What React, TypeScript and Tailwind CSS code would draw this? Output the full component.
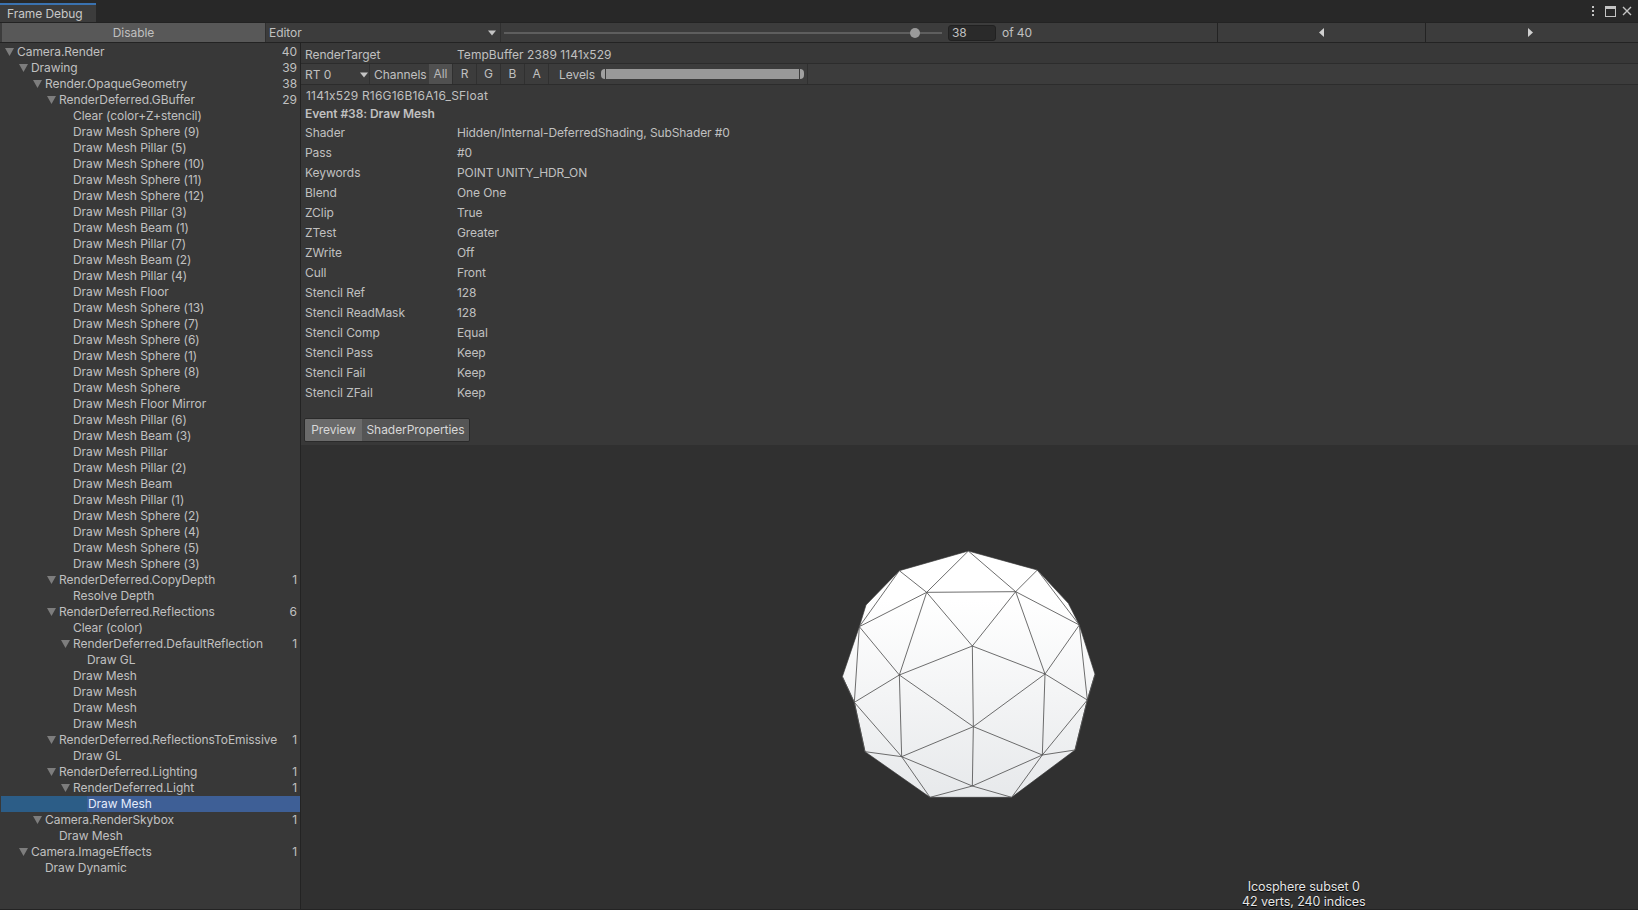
import React from "react";

type Row = { label: string; depth: number; arrow?: boolean; count?: number; selected?: boolean };

const rows: Row[] = [
  { label: "Camera.Render", depth: 0, arrow: true, count: 40 },
  { label: "Drawing", depth: 1, arrow: true, count: 39 },
  { label: "Render.OpaqueGeometry", depth: 2, arrow: true, count: 38 },
  { label: "RenderDeferred.GBuffer", depth: 3, arrow: true, count: 29 },
  { label: "Clear (color+Z+stencil)", depth: 4 },
  { label: "Draw Mesh Sphere (9)", depth: 4 },
  { label: "Draw Mesh Pillar (5)", depth: 4 },
  { label: "Draw Mesh Sphere (10)", depth: 4 },
  { label: "Draw Mesh Sphere (11)", depth: 4 },
  { label: "Draw Mesh Sphere (12)", depth: 4 },
  { label: "Draw Mesh Pillar (3)", depth: 4 },
  { label: "Draw Mesh Beam (1)", depth: 4 },
  { label: "Draw Mesh Pillar (7)", depth: 4 },
  { label: "Draw Mesh Beam (2)", depth: 4 },
  { label: "Draw Mesh Pillar (4)", depth: 4 },
  { label: "Draw Mesh Floor", depth: 4 },
  { label: "Draw Mesh Sphere (13)", depth: 4 },
  { label: "Draw Mesh Sphere (7)", depth: 4 },
  { label: "Draw Mesh Sphere (6)", depth: 4 },
  { label: "Draw Mesh Sphere (1)", depth: 4 },
  { label: "Draw Mesh Sphere (8)", depth: 4 },
  { label: "Draw Mesh Sphere", depth: 4 },
  { label: "Draw Mesh Floor Mirror", depth: 4 },
  { label: "Draw Mesh Pillar (6)", depth: 4 },
  { label: "Draw Mesh Beam (3)", depth: 4 },
  { label: "Draw Mesh Pillar", depth: 4 },
  { label: "Draw Mesh Pillar (2)", depth: 4 },
  { label: "Draw Mesh Beam", depth: 4 },
  { label: "Draw Mesh Pillar (1)", depth: 4 },
  { label: "Draw Mesh Sphere (2)", depth: 4 },
  { label: "Draw Mesh Sphere (4)", depth: 4 },
  { label: "Draw Mesh Sphere (5)", depth: 4 },
  { label: "Draw Mesh Sphere (3)", depth: 4 },
  { label: "RenderDeferred.CopyDepth", depth: 3, arrow: true, count: 1 },
  { label: "Resolve Depth", depth: 4 },
  { label: "RenderDeferred.Reflections", depth: 3, arrow: true, count: 6 },
  { label: "Clear (color)", depth: 4 },
  { label: "RenderDeferred.DefaultReflection", depth: 4, arrow: true, count: 1 },
  { label: "Draw GL", depth: 5 },
  { label: "Draw Mesh", depth: 4 },
  { label: "Draw Mesh", depth: 4 },
  { label: "Draw Mesh", depth: 4 },
  { label: "Draw Mesh", depth: 4 },
  { label: "RenderDeferred.ReflectionsToEmissive", depth: 3, arrow: true, count: 1 },
  { label: "Draw GL", depth: 4 },
  { label: "RenderDeferred.Lighting", depth: 3, arrow: true, count: 1 },
  { label: "RenderDeferred.Light", depth: 4, arrow: true, count: 1 },
  { label: "Draw Mesh", depth: 5, selected: true },
  { label: "Camera.RenderSkybox", depth: 2, arrow: true, count: 1 },
  { label: "Draw Mesh", depth: 3 },
  { label: "Camera.ImageEffects", depth: 1, arrow: true, count: 1 },
  { label: "Draw Dynamic", depth: 2 },
];

const props = [
  ["Shader", "Hidden/Internal-DeferredShading, SubShader #0"],
  ["Pass", "#0"],
  ["Keywords", "POINT UNITY_HDR_ON"],
  ["Blend", "One One"],
  ["ZClip", "True"],
  ["ZTest", "Greater"],
  ["ZWrite", "Off"],
  ["Cull", "Front"],
  ["Stencil Ref", "128"],
  ["Stencil ReadMask", "128"],
  ["Stencil Comp", "Equal"],
  ["Stencil Pass", "Keep"],
  ["Stencil Fail", "Keep"],
  ["Stencil ZFail", "Keep"],
];

// sphere vertices, traced from the preview
const v: Record<string, [number, number]> = {
  A: [445, 63], B: [238, 122], C: [652, 120], D: [320, 187], E: [587, 185], F: [118, 290],
  G: [778, 285], H: [457, 348], I: [238, 435], J: [675, 432], K: [67, 440], L: [825, 433],
  M: [103, 517], N: [802, 510], O: [460, 590], P: [245, 680], Q: [667, 675], R: [135, 665],
  S: [765, 660], T: [457, 768], U: [330, 802], V: [575, 802], W: [138, 225], X: [745, 220],
};
const outline = "A C X G L N S V U R M K F W B";
const edges =
  "AD AE BD CE DE DF EG DH EH DI EJ FI GJ HI HJ HO IO JO IP JQ OP OQ OT IM JN FM GN MP NQ MR NS PR QS PT QT PU QV TU TV BF CG KM LN";

function Sphere() {
  const pts = outline
    .split(" ")
    .map((k) => v[k].join(","))
    .join(" ");
  return (
    <svg width="300" height="280" viewBox="0 0 900 840" className="mb-[15px]">
      <defs>
        <linearGradient id="shade" x1="0" y1="0" x2="0" y2="1">
          <stop offset="0.2" stopColor="#ffffff" />
          <stop offset="1" stopColor="#e7e9eb" />
        </linearGradient>
      </defs>
      <polygon points={pts} fill="url(#shade)" stroke="#3a3a3a" strokeWidth="2" />
      {edges.split(" ").map((e, i) => (
        <line
          key={i}
          x1={v[e[0]][0]}
          y1={v[e[0]][1]}
          x2={v[e[1]][0]}
          y2={v[e[1]][1]}
          stroke="#505050"
          strokeWidth="2.5"
        />
      ))}
    </svg>
  );
}

function Down({ className = "" }: { className?: string }) {
  return (
    <svg width="10" height="6" viewBox="0 0 10 6" className={className}>
      <polygon points="1,0.5 9,0.5 5,5.5" fill="#c4c4c4" />
    </svg>
  );
}

function TreeRow({ row }: { row: Row }) {
  const indent = 17 + row.depth * 14;
  if (row.selected) {
    return (
      <div className="flex h-4 items-center bg-[#3e5f96] text-[#e4ecfb]">
        <div className="h-4 bg-[#2c5d87]" style={{ width: indent - 1 }} />
        <span className="pl-px">{row.label}</span>
      </div>
    );
  }
  return (
    <div className="relative flex h-4 items-center pr-[3px]" style={{ paddingLeft: indent - 1 }}>
      {row.arrow && (
        <svg width="9" height="8" viewBox="0 0 9 8" className="absolute top-1" style={{ left: indent - 13 }}>
          <polygon points="0,0 9,0 4.5,8" fill="#7d7d7d" />
        </svg>
      )}
      <span className="flex-1">{row.label}</span>
      {row.count !== undefined && <span>{row.count}</span>}
    </div>
  );
}

function Channel({ label, active }: { label: string; active?: boolean }) {
  return (
    <div
      className={
        "flex h-full w-6 items-center justify-center border-r border-[#303030] " +
        (active ? "bg-[#505050] text-[#b8b8b8]" : "")
      }
    >
      {label}
    </div>
  );
}

export default function App() {
  return (
    <div className="flex h-[910px] w-full flex-col overflow-hidden bg-[#383838] font-['Inter',sans-serif] text-[12px] tracking-[-0.06px] text-[#c0c0c0] [font-feature-settings:'calt'_0]">
      {/* tab strip */}
      <div className="flex h-[22px] shrink-0 items-end justify-between bg-[#282828]">
        <div className="flex h-[19px] w-[96px] items-center border-t-2 border-[#3a72b0] bg-[#3c3c3c] pl-[7px] pt-px text-[#c8c8c8]">
          Frame Debug
        </div>
        <div className="mr-[6px] flex h-full items-center gap-[8px]">
          <svg width="4" height="12" viewBox="0 0 4 12">
            <rect x="1" y="1" width="2" height="2" fill="#c4c4c4" />
            <rect x="1" y="5" width="2" height="2" fill="#c4c4c4" />
            <rect x="1" y="9" width="2" height="2" fill="#c4c4c4" />
          </svg>
          <svg width="11" height="11" viewBox="0 0 11 11" className="ml-[2px] mr-[-2px]">
            <rect x="0.5" y="0.5" width="10" height="10" fill="none" stroke="#c4c4c4" />
            <rect x="0" y="0" width="11" height="3" fill="#c4c4c4" />
          </svg>
          <svg width="10" height="10" viewBox="0 0 10 10">
            <path d="M1 1 L9 9 M9 1 L1 9" stroke="#c4c4c4" strokeWidth="1.4" />
          </svg>
        </div>
      </div>

      {/* toolbar */}
      <div className="flex h-[21px] shrink-0 items-center border-y border-[#232323] bg-[#3c3c3c]">
        <div className="ml-[2px] flex h-full w-[264px] items-center justify-center border-r border-[#303030] bg-[#585858] pt-px">
          Disable
        </div>
        <div className="flex h-full w-[235px] items-center justify-between border-r border-[#303030] pl-[3px] pr-[3px] pt-px">
          <span>Editor</span>
          <Down />
        </div>
        <div className="ml-[3px] flex w-[438px] items-center">
          <div className="relative h-[2px] w-full bg-[#5e5e5e]">
            <div className="absolute right-[22px] top-[-4px] h-[10px] w-[10px] rounded-full bg-[#9a9a9a]" />
          </div>
        </div>
        <div className="ml-[6px] flex h-4 w-[48px] items-center rounded-[3px] border border-[#212121] bg-[#2a2a2a] pl-[3px]">
          38
        </div>
        <span className="ml-[6px] w-[215px] pt-px">of 40</span>
        <div className="flex h-full w-[209px] items-center justify-center border-x border-[#232323]">
          <svg width="5" height="9" viewBox="0 0 5 9">
            <polygon points="5,0 5,9 0,4.5" fill="#d0d0d0" />
          </svg>
        </div>
        <div className="flex h-full flex-1 items-center justify-center">
          <svg width="5" height="9" viewBox="0 0 5 9" className="mr-[4px]">
            <polygon points="0,0 0,9 5,4.5" fill="#d0d0d0" />
          </svg>
        </div>
      </div>

      <div className="flex min-h-0 flex-1 border-b border-[#232323]">
        {/* event tree */}
        <div className="ml-px w-[300px] shrink-0 border-r border-[#232323] bg-[#383838] pt-px">
          {rows.map((row, i) => (
            <TreeRow key={i} row={row} />
          ))}
        </div>

        {/* details */}
        <div className="flex min-w-0 flex-1 flex-col">
          <div className="flex h-[21px] shrink-0 items-center border-b border-[#2c2c2c] pl-[4px] pt-[3px]">
            <span className="w-[152px]">RenderTarget</span>
            <span className="tracking-[0.05px]">TempBuffer 2389 1141x529</span>
          </div>
          <div className="flex h-[21px] shrink-0 items-center border-b border-[#2c2c2c] bg-[#3c3c3c]">
            <div className="flex h-full w-[69px] items-center justify-between border-r border-[#303030] pl-[4px] pt-px">
              <span>RT 0</span>
              <Down />
            </div>
            <span className="w-[59px] pl-[4px] pt-px">Channels</span>
            <Channel label="All" active />
            <Channel label="R" />
            <Channel label="G" />
            <Channel label="B" />
            <Channel label="A" />
            <span className="ml-[10px] w-[42px] pt-px">Levels</span>
            <div className="flex h-full w-[207px] items-center border-r border-[#303030] pr-[3px]">
              <div className="h-[10px] w-[4px] rounded-l-full bg-[#a0a0a0]" />
              <div className="ml-px h-[10px] flex-1 bg-[#999999]" />
              <div className="ml-px h-[10px] w-[4px] rounded-r-full bg-[#a0a0a0]" />
            </div>
          </div>
          <div className="flex flex-col pl-[4px]">
            <div className="flex h-[20px] items-center pl-[1px] pt-[2px] tracking-[0.2px]">1141x529 R16G16B16A16_SFloat</div>
            <div className="flex h-[17px] items-center font-semibold">Event #38: Draw Mesh</div>
            <div className="mt-[1px] flex flex-col">
              {props.map(([k, val]) => (
                <div key={k} className="flex h-[20px] items-center">
                  <span className="w-[152px]">{k}</span>
                  <span className="tracking-[-0.1px]">{val}</span>
                </div>
              ))}
            </div>
            <div className="mt-[15px] ml-[-1px] flex h-[24px] w-[166px] overflow-hidden rounded-[2px] border border-[#2a2a2a] text-[#d8d8d8]">
              <div className="flex w-[57px] items-center justify-center bg-[#6a6a6a]">Preview</div>
              <div className="flex flex-1 items-center justify-center bg-[#555555]">ShaderProperties</div>
            </div>
          </div>

          {/* preview */}
          <div className="relative mt-[3px] flex min-h-0 flex-1 items-center justify-center bg-[#303030]">
            <Sphere />
            <div className="absolute bottom-0 left-3/4 -translate-x-1/2 text-center text-[12.5px] leading-[15px] text-[#e6e6e6] [text-shadow:0_1px_1px_#000]">
              <div>Icosphere subset 0</div>
              <div>42 verts, 240 indices</div>
            </div>
          </div>
        </div>
      </div>
    </div>
  );
}
